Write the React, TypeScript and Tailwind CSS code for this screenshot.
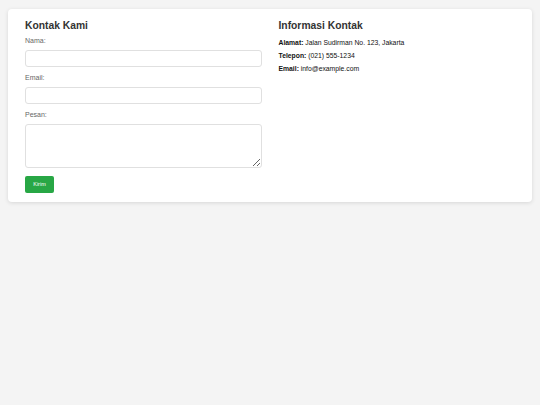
export default function App() {
  return (
    <div className="min-h-[405px] bg-[#f4f4f4] pt-[9px] px-[8px] font-['Liberation_Sans',Arial,sans-serif]">
      <div className="bg-white rounded-[4px] shadow-[0_1px_4px_rgba(0,0,0,0.12)] px-[17px] pt-[10px] pb-[9px]">
        <div className="grid grid-cols-2 gap-[17px]">
          <div>
            <h2 className="text-[10.3px] leading-[14px] font-bold text-[#333] mb-[3px]">
              Kontak Kami
            </h2>
            <div className="mb-[6px]">
              <label className="block text-[7px] leading-[9px] text-[#666] mb-[5px]">
                Nama:
              </label>
              <input className="block w-full h-[17px] border border-[#e0e0e0] rounded-[3px]" />
            </div>
            <div className="mb-[6px]">
              <label className="block text-[7px] leading-[9px] text-[#666] mb-[5px]">
                Email:
              </label>
              <input className="block w-full h-[17px] border border-[#e0e0e0] rounded-[3px]" />
            </div>
            <div className="mb-[8px]">
              <label className="block text-[7px] leading-[9px] text-[#666] mb-[5px]">
                Pesan:
              </label>
              <textarea className="block w-full h-[44px] border border-[#e0e0e0] rounded-[3px]" />
            </div>
            <button className="block w-[29px] h-[17px] bg-[#28a745] text-white text-[5.5px] leading-[17px] rounded-[2px]">
              Kirim
            </button>
          </div>
          <div>
            <h2 className="text-[10.3px] leading-[14px] font-bold text-[#333] mb-[4px]">
              Informasi Kontak
            </h2>
            <p className="text-[6.8px] leading-[12.8px] text-[#111]">
              <strong>Alamat:</strong> Jalan Sudirman No. 123, Jakarta
            </p>
            <p className="text-[6.8px] leading-[12.8px] text-[#111]">
              <strong>Telepon:</strong> (021) 555-1234
            </p>
            <p className="text-[6.8px] leading-[12.8px] text-[#111]">
              <strong>Email:</strong> info@example.com
            </p>
          </div>
        </div>
      </div>
    </div>
  );
}
